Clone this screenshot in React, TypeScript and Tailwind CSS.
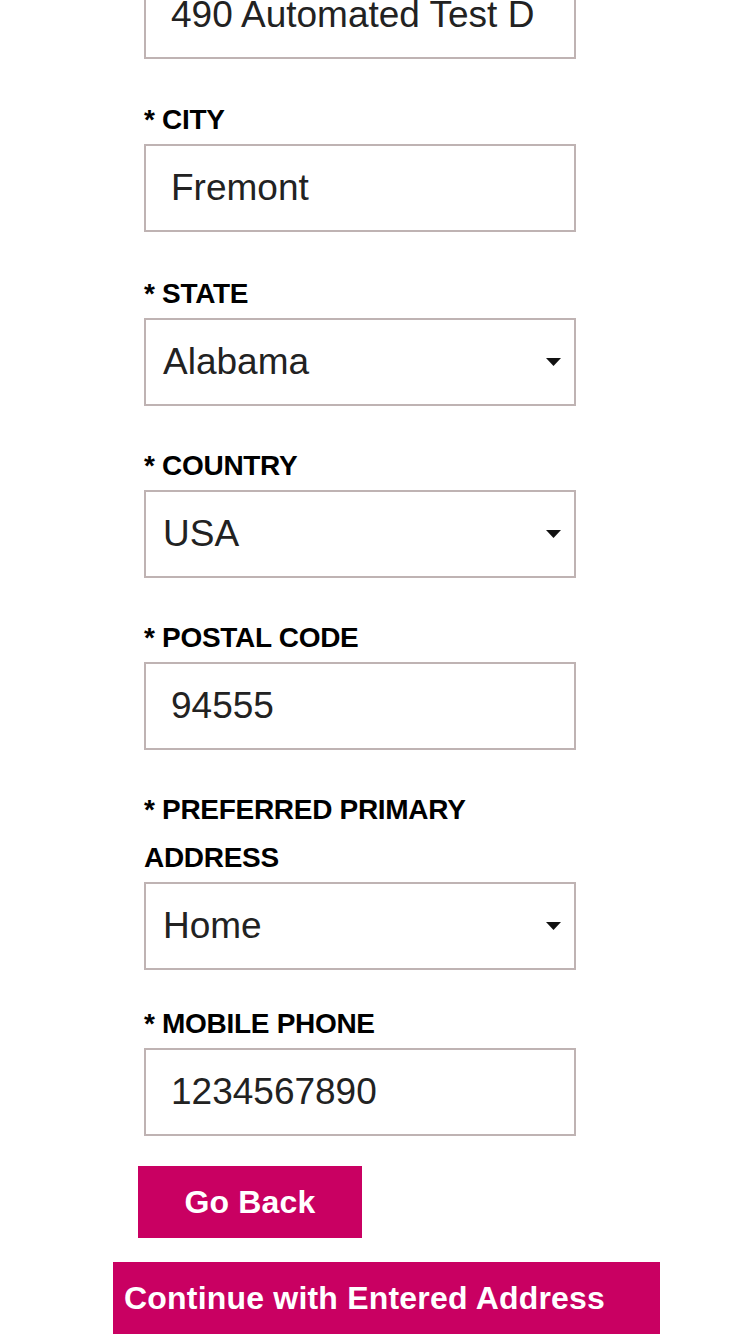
import React from 'react';

interface Field {
  label: string;
  value: string;
  select?: boolean;
  gap: string;
}

// gap above each label differs a little in the source page
const fields: Field[] = [
  { label: '* CITY', value: 'Fremont', gap: 'mt-[37px]' },
  { label: '* STATE', value: 'Alabama', select: true, gap: 'mt-[38px]' },
  { label: '* COUNTRY', value: 'USA', select: true, gap: 'mt-[36px]' },
  { label: '* POSTAL CODE', value: '94555', gap: 'mt-[36px]' },
  { label: '* PREFERRED PRIMARY ADDRESS', value: 'Home', select: true, gap: 'mt-[36px]' },
  { label: '* MOBILE PHONE', value: '1234567890', gap: 'mt-[30px]' },
];

function Box({ value, select }: { value: string; select?: boolean }) {
  return (
    <div
      className={`flex items-center h-[88px] w-[432px] border-2 border-[#bfb3b3] bg-white overflow-hidden whitespace-nowrap text-[37px] text-[#222222] ${
        select ? 'pl-[17px] pr-[13px] justify-between' : 'pl-[25px] pr-[25px]'
      }`}
    >
      <span>{value}</span>
      {select && (
        <svg width="15" height="8" viewBox="0 0 15 8" className="shrink-0">
          <path d="M0 0h15L7.5 8z" fill="#111" />
        </svg>
      )}
    </div>
  );
}

export default function App() {
  return (
    <div className="min-h-screen bg-white font-['Liberation_Sans',Arial,sans-serif] overflow-hidden">
      <div className="ml-[144px] w-[432px]">
        <div className="-mt-[29px]">
          <Box value="490 Automated Test D" />
        </div>

        {fields.map((f) => (
          <div key={f.label} className={f.gap}>
            <p className="text-[28px] leading-[48px] font-bold text-black tracking-[-0.3px]">
              {f.label}
            </p>
            <Box value={f.value} select={f.select} />
          </div>
        ))}
      </div>

      <button className="mt-[30px] ml-[138px] w-[224px] h-[72px] bg-[#c90062] text-white text-[32px] font-bold tracking-[0.2px] flex items-center justify-center">
        Go Back
      </button>

      <button className="mt-[24px] ml-[113px] w-[547px] h-[72px] bg-[#c90062] text-white text-[32px] font-bold tracking-[0.2px] flex items-center pl-[11px] whitespace-nowrap">
        Continue with Entered Address
      </button>
    </div>
  );
}
